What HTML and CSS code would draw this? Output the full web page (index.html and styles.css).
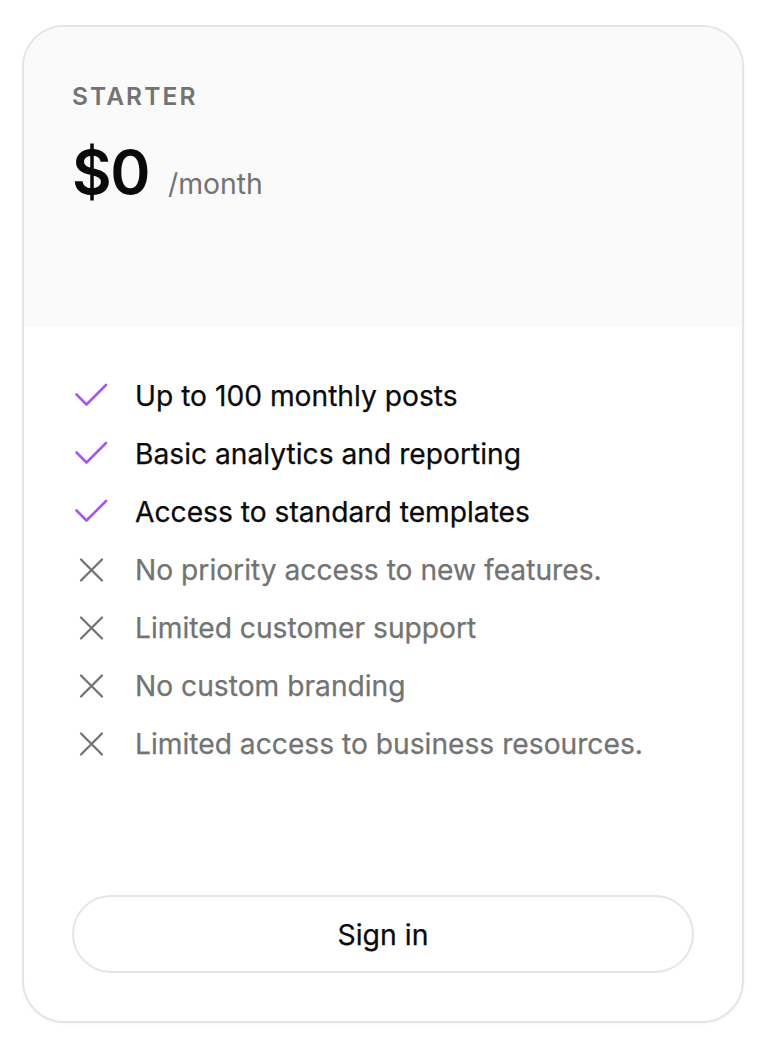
FILE: index.html
```html
<!DOCTYPE html>
<html lang="en">
<head>
<meta charset="utf-8">
<title>Starter plan</title>
<link rel="stylesheet" href="styles.css">
</head>
<body>
<div class="card">
  <div class="card-head">
    <div class="plan">STARTER</div>
    <div class="price-row">
      <span class="price">$0</span>
      <span class="period">/month</span>
    </div>
  </div>
  <div class="card-body">
    <ul class="features">
      <li class="feature yes">
        <svg class="icon" viewBox="0 0 40 40"><path d="M4.5 18.5L14.5 28.5L34 9"/></svg>
        <span>Up to 100 monthly posts</span>
      </li>
      <li class="feature yes">
        <svg class="icon" viewBox="0 0 40 40"><path d="M4.5 18.5L14.5 28.5L34 9"/></svg>
        <span>Basic analytics and reporting</span>
      </li>
      <li class="feature yes">
        <svg class="icon" viewBox="0 0 40 40"><path d="M4.5 18.5L14.5 28.5L34 9"/></svg>
        <span>Access to standard templates</span>
      </li>
      <li class="feature no">
        <svg class="icon" viewBox="0 0 40 40"><path d="M9 9.5L30 30.5M30 9.5L9 30.5"/></svg>
        <span>No priority access to new features.</span>
      </li>
      <li class="feature no">
        <svg class="icon" viewBox="0 0 40 40"><path d="M9 9.5L30 30.5M30 9.5L9 30.5"/></svg>
        <span>Limited customer support</span>
      </li>
      <li class="feature no">
        <svg class="icon" viewBox="0 0 40 40"><path d="M9 9.5L30 30.5M30 9.5L9 30.5"/></svg>
        <span>No custom branding</span>
      </li>
      <li class="feature no">
        <svg class="icon" viewBox="0 0 40 40"><path d="M9 9.5L30 30.5M30 9.5L9 30.5"/></svg>
        <span>Limited access to business resources.</span>
      </li>
    </ul>
    <button class="btn">Sign in</button>
  </div>
</div>
</body>
</html>
```

FILE: styles.css
```css
* { box-sizing: border-box; }
html, body { margin: 0; background: #ffffff; }
body {
  padding: 25px 24px 29px 22px;
  font-family: "Inter", "Noto Sans", sans-serif;
  color: #0a0a0a;
}
.card {
  width: 722px;
  height: 998px;
  border: 2px solid #e5e5e5;
  border-radius: 42px;
  overflow: hidden;
  display: flex;
  flex-direction: column;
  background: #ffffff;
  box-shadow: 0 1px 3px rgba(0,0,0,0.04);
}
.card-head {
  background: #fafafa;
  height: 300px;
  padding: 51px 48px 0 48px;
}
.plan {
  font-size: 24.5px;
  font-weight: 600;
  letter-spacing: 2.1px;
  color: #737373;
  line-height: 36px;
}
.price-row {
  display: flex;
  align-items: baseline;
  gap: 19px;
  margin-top: 23px;
}
.price {
  font-size: 61px;
  font-weight: 600;
  line-height: 70px;
  letter-spacing: -1.5px;
}
.period {
  font-size: 28.4px;
  color: #737373;
}
.card-body {
  flex: 1;
  display: flex;
  flex-direction: column;
  padding: 48px 48px 48px 48px;
}
.features {
  list-style: none;
  margin: 0;
  padding: 0;
  display: flex;
  flex-direction: column;
  gap: 16px;
}
.feature {
  display: flex;
  align-items: center;
  gap: 23px;
  font-size: 28.2px;
  line-height: 42px;
  -webkit-text-stroke: 0.25px currentColor;
}
.icon {
  width: 40px;
  height: 40px;
  flex: none;
  fill: none;
  stroke-width: 2.6;
  stroke-linecap: round;
  stroke-linejoin: round;
}
.no .icon { stroke-width: 2.3; }
.yes { color: #0a0a0a; }
.yes .icon { stroke: #a855f7; }
.no { color: #737373; }
.no .icon { stroke: #737373; }
.btn {
  margin-top: auto;
  height: 78px;
  width: 100%;
  border: 2px solid #e5e5e5;
  border-radius: 999px;
  background: #ffffff;
  font-family: inherit;
  font-size: 28.4px;
  color: #0a0a0a;
  -webkit-text-stroke: 0.25px currentColor;
}
```
